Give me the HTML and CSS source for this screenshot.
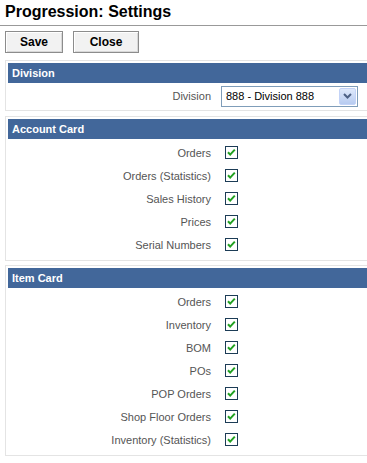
FILE: index.html
```html
<!DOCTYPE html>
<html lang="en">
<head>
    <meta charset="UTF-8">
    <meta name="viewport" content="width=device-width, initial-scale=1.0">
    <title>Progression: Settings</title>
    <link rel="stylesheet" href="styles.css">
</head>
<body>
    <h1 class="page-title">Progression: Settings</h1>

    <div class="toolbar">
        <button class="btn">Save</button>
        <button class="btn">Close</button>
    </div>

    <div class="panel">
        <div class="panel-head">Division</div>
        <div class="row row-select">
            <span class="label">Division</span>
            <div class="select">
                <span class="select-text">888 - Division 888</span>
                <span class="select-arrow">
                    <svg width="9" height="6" viewBox="0 0 9 6"><path d="M1 1 L4.5 4.5 L8 1" fill="none" stroke="#4d6185" stroke-width="2"/></svg>
                </span>
            </div>
        </div>
    </div>

    <div class="panel">
        <div class="panel-head">Account Card</div>
        <div class="rows">
            <div class="row"><span class="label">Orders</span><span class="check"></span></div>
            <div class="row"><span class="label">Orders (Statistics)</span><span class="check"></span></div>
            <div class="row"><span class="label">Sales History</span><span class="check"></span></div>
            <div class="row"><span class="label">Prices</span><span class="check"></span></div>
            <div class="row"><span class="label">Serial Numbers</span><span class="check"></span></div>
        </div>
    </div>

    <div class="panel">
        <div class="panel-head">Item Card</div>
        <div class="rows">
            <div class="row"><span class="label">Orders</span><span class="check"></span></div>
            <div class="row"><span class="label">Inventory</span><span class="check"></span></div>
            <div class="row"><span class="label">BOM</span><span class="check"></span></div>
            <div class="row"><span class="label">POs</span><span class="check"></span></div>
            <div class="row"><span class="label">POP Orders</span><span class="check"></span></div>
            <div class="row"><span class="label">Shop Floor Orders</span><span class="check"></span></div>
            <div class="row"><span class="label">Inventory (Statistics)</span><span class="check"></span></div>
        </div>
    </div>

    <script>
        // draw the ticked boxes
        var tick = '<svg width="13" height="13" viewBox="0 0 13 13">' +
            '<rect x="0.5" y="0.5" width="12" height="12" fill="#fff" stroke="#1c3c56"/>' +
            '<path d="M3 6.2 L5.2 8.6 L9.8 3.6" fill="none" stroke="#21a121" stroke-width="2"/></svg>';
        document.querySelectorAll('.check').forEach(function (el) {
            el.innerHTML = tick;
        });
    </script>
</body>
</html>
```

FILE: styles.css
```css
body {
    margin: 0;
    font-family: "Liberation Sans", Arial, sans-serif;
    background-color: #fff;
    overflow: hidden;
}
.page-title {
    margin: 0;
    padding: 3px 5px 0;
    height: 22px;
    font-size: 16px;
    font-weight: bold;
    color: #000;
    border-bottom: 1px solid #999;
}
.toolbar {
    display: flex;
    gap: 10px;
    padding: 5px 5px 7px;
}
.btn {
    width: 58px;
    height: 22px;
    padding: 0;
    font-family: inherit;
    font-size: 12px;
    font-weight: bold;
    color: #000;
    background-color: #f2f2f2;
    border: 1px solid #8c8c8c;
    box-shadow: inset 1px 1px 0 #fff, inset -1px -1px 0 #d8d8d8;
}
.btn + .btn {
    width: 66px;
}
.panel {
    margin: 0 0 5px 5px;
    padding: 2px 0 1px 2px;
    border: 1px solid #e4e4e4;
    border-right: none;
}
.panel + .panel + .panel {
    margin-top: -1px;
}
.panel-head {
    height: 20px;
    line-height: 20px;
    padding-left: 4px;
    background-color: #42679a;
    color: #fff;
    font-size: 11px;
    font-weight: bold;
}
.rows {
    padding: 2px 0 3px;
}
.row {
    display: flex;
    align-items: center;
    height: 23px;
}
.row-select {
    height: 26px;
}
.label {
    width: 203px;
    text-align: right;
    font-size: 11px;
    color: #555;
}
.check {
    display: flex;
    margin-left: 14px;
}
.select {
    display: flex;
    align-items: center;
    justify-content: space-between;
    width: 135px;
    height: 19px;
    margin-left: 10px;
    border: 1px solid #7f9db9;
    background-color: #fff;
}
.select-text {
    padding-left: 4px;
    font-size: 11px;
    color: #000;
}
.select-arrow {
    display: flex;
    align-items: center;
    justify-content: center;
    width: 15px;
    height: 15px;
    margin-right: 1px;
    background: linear-gradient(#dfe9fb, #b7cbf0);
    border: 1px solid #c3d3f7;
    border-radius: 2px;
}
```
